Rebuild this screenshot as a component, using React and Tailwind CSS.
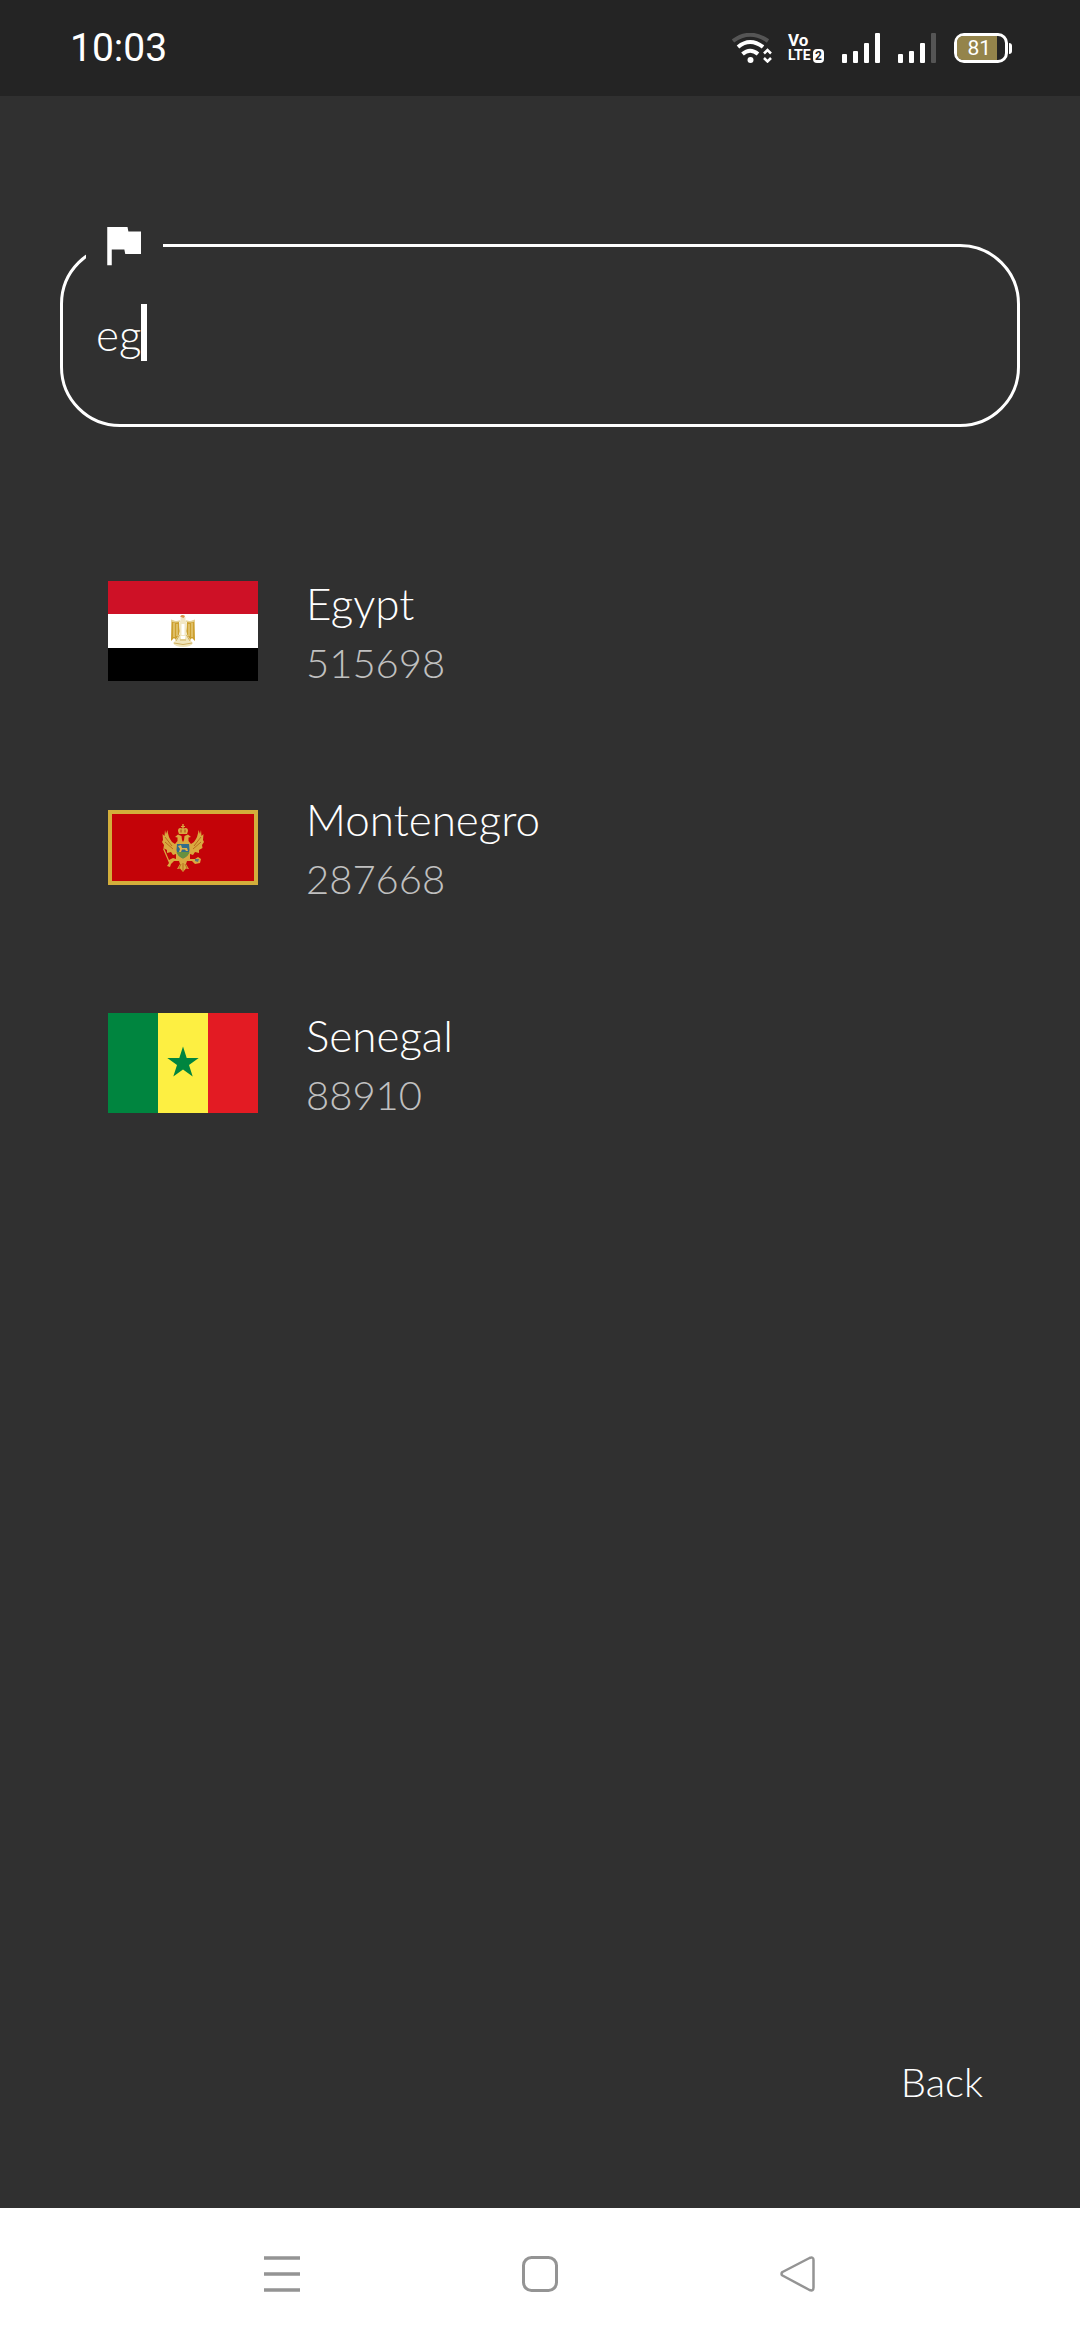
import { useState } from "react";

function EgyptFlag() {
  return (
    <svg viewBox="0 0 150 100" className="block w-full" role="img" aria-label="Flag of Egypt">
      <rect width="150" height="100" fill="#fff" />
      <rect width="150" height="33" fill="#ce1126" />
      <rect y="67" width="150" height="33" fill="#000" />
      <path d="M71 41Q66 41 63.500 38.500L63 60L66 57L68 59L70.500 55L72 50ZM79 41Q84 41 86.500 38.500L87 60L84 57L82 59L79.500 55L78 50Z" fill="#cc9f2e" />
      <path d="M66 42V56M69 43V55M84 42V56M81 43V55" stroke="#f0dc9b" strokeWidth="1" />
      <path d="M63.500 39.500Q67 41.500 72 40M86.500 39.500Q83 41.500 78 40" fill="none" stroke="#e6d397" strokeWidth="1.500" />
      <path d="M72.500 39Q72 34.500 75 34.500Q78 34.500 77.500 39L79 43L78 55H72L71 43Z" fill="#f2e7c4" />
      <path d="M75 43V54" stroke="#fff" strokeWidth="3" />
      <path d="M72 35.500Q74 33 77 35L75.500 37Z" fill="#d98f4a" />
      <path d="M72 52L67 60L65 62Q67 66 75 66Q83 66 85 62L83 60L78 52L77 58H73Z" fill="#efe4ba" />
      <path d="M71.500 54L68 60M78.500 54L82 60M66 62Q75 65 84 62M72 59H78" fill="none" stroke="#d0b05f" strokeWidth="1" />
    </svg>
  );
}

function MontenegroFlag() {
  return (
    <svg viewBox="0 0 150 75" className="block w-full" role="img" aria-label="Flag of Montenegro">
      <rect width="150" height="75" fill="#d3ae3b" />
      <rect x="4" y="4" width="142" height="67" fill="#c40308" />
      <g fill="#d9a940">
        <path d="M74.300 14H75.700V16H77V17H75.700V18.500Q80 17 80 21L79 24H71L70 21Q70 17 74.300 18.500V17H73V16H74.300Z" />
        <path d="M67 27L70 24.500L73.500 26L74 30L75 32L76 30L76.500 26L80 24.500L83 27L80.500 27.500L80.500 31L83 34L86 32Q90 27 90.500 20L92 24L93 20L93.500 26L95.500 24L95 30L96 32L94 35L94.500 38L91 40L91 43L87 42L85 45L82 44L82 49L87 49L90 47L93 49L92 53L87 54L84 51L79 51L78 54L81 59L78 58.500L75 62L72 58.500L69 59L72 54L71 51L66 51L63 54L62 57L59 56L61 53L55 39L56 38L61 50L65 48L68 49L68 44L65 45L63 42L59 43L59 40L55.500 38L56 35L54 32L55 30L54.500 24L56.500 26L57 20L58 24L59.500 20Q60 27 64 32L67 34L69.500 31V27.500Z" />
      </g>
      <path d="M57 27L64 36M57 32L65 39M93 27L86 36M93 32L85 39M73 54L71 58M77 54L79 58M75 53V61" fill="none" stroke="#b96b1d" strokeWidth="1" />
      <path d="M73 19.500V22.500M77 19.500V22.500" stroke="#a44a14" strokeWidth="1" />
      <path d="M69 34H81L81.500 40Q81 46 75 48.500Q69 46 68.500 40Z" fill="#316d8b" />
      <path d="M68.500 42H81.500Q80 46.500 75 48.500Q70 46.500 68.500 42Z" fill="#67913f" />
      <path d="M70 36L73 35L74 38H79L80 41H78L77 39.500H74L73 42H71L72 39Z" fill="#e2b64d" />
      <path d="M87 49H91L90 52L87 51Z" fill="#5b7281" />
    </svg>
  );
}

function SenegalFlag() {
  return (
    <svg viewBox="0 0 150 100" className="block w-full" role="img" aria-label="Flag of Senegal">
      <rect width="50" height="100" fill="#00853f" />
      <rect x="50" width="50" height="100" fill="#fdef42" />
      <rect x="100" width="50" height="100" fill="#e31b23" />
      <polygon points="75,33.500 78.700,45 90.700,45 81,52.100 84.700,63.500 75,56.500 65.300,63.500 69,52.100 59.300,45 71.300,45" fill="#00853f" />
    </svg>
  );
}

const countries = [
  { name: "Egypt", cases: "515698", Flag: EgyptFlag },
  { name: "Montenegro", cases: "287668", Flag: MontenegroFlag },
  { name: "Senegal", cases: "88910", Flag: SenegalFlag },
];

function Signal({ last }) {
  return (
    <svg viewBox="0 0 38 30" className="h-[30px] w-[38px]" fill="#fff" aria-hidden="true">
      <rect y="21" width="5" height="9" rx="1" />
      <rect x="11" y="18" width="5" height="12" rx="1" />
      <rect x="22" y="10" width="5" height="20" rx="1" />
      <rect x="33" width="5" height="30" rx="1" fill={last} />
    </svg>
  );
}

function StatusBar() {
  return (
    <header className="flex h-24 items-center justify-between bg-[#242424] pr-[68px] pl-[70px] font-normal text-white">
      <time className="font-[Roboto,sans-serif] text-[39px] leading-none">10:03</time>
      <div className="flex items-center">
        <svg viewBox="0 0 40 30" className="mr-4 h-[30px] w-10" fill="none" aria-hidden="true">
          <path d="M1 8Q18 -4.500 36 8" stroke="#555" strokeWidth="4" />
          <path d="M6 14Q18 4 31 14" stroke="#fff" strokeWidth="4" />
          <path d="M10.500 21Q18 14.500 26 21" stroke="#fff" strokeWidth="4" />
          <circle cx="18.500" cy="27" r="3" fill="#fff" />
          <path d="M32 20.500L35.500 17L39 20.500M32 25L35.500 28.500L39 25" stroke="#fff" strokeWidth="2.500" />
        </svg>
        <div className="mr-[18px] flex w-9 flex-col font-[Roboto,sans-serif] font-bold">
          <span className="text-[17px] leading-[15px]">Vo</span>
          <span className="flex items-center justify-between text-[14px] leading-[15px]">
            LTE
            <span className="flex h-[14px] w-[11px] items-center justify-center rounded-sm bg-white text-xs leading-none text-[#242424]">2</span>
          </span>
        </div>
        <div className="mr-[18px] flex"><Signal last="#fff" /></div>
        <div className="mr-[18px] flex"><Signal last="#555" /></div>
        <div className="flex h-[30px] w-[54px] rounded-[10px] border-[3px] border-white">
          <span className="flex w-10 items-center justify-end rounded-l-[6px] bg-[#94844b] pr-1.5 font-[Roboto,sans-serif] text-[21px] leading-none">81</span>
        </div>
        <span className="ml-px h-[11px] w-[3px] rounded-r-sm bg-white" />
      </div>
    </header>
  );
}

function NavBar() {
  return (
    <nav className="flex h-[132px] items-center justify-around bg-white px-[153px] text-[#949494]">
      <button aria-label="Recent apps">
        <svg viewBox="0 0 36 36" className="size-9" fill="none" stroke="currentColor" strokeWidth="3.500" strokeLinecap="square">
          <path d="M1.500 2H34.500M1.500 18H34.500M1.500 34H34.500" />
        </svg>
      </button>
      <button aria-label="Home">
        <svg viewBox="0 0 36 36" className="size-9" fill="none" stroke="currentColor" strokeWidth="3">
          <rect x="1.500" y="1.500" width="33" height="33" rx="8" />
        </svg>
      </button>
      <button aria-label="Previous screen">
        <svg viewBox="0 0 36 36" className="size-9" fill="none" stroke="currentColor" strokeWidth="2.500" strokeLinejoin="round">
          <path d="M2.500 16Q0.500 18 2.500 19.500L29.500 34Q33.500 35.500 33.500 31.500V4Q33.500 0.500 29.500 2Z" />
        </svg>
      </button>
    </nav>
  );
}

export default function App() {
  const [query, setQuery] = useState("eg");
  const shown = countries.filter((c) => c.name.toLowerCase().includes(query.toLowerCase()));

  return (
    <div className="flex min-h-screen flex-col bg-[#303030] font-[Lato,sans-serif] font-light text-white">
      <StatusBar />
      <main className="flex grow flex-col px-[60px] pt-[122px]">
        <fieldset className="rounded-[60px] border-[3px] border-white pr-8 pb-[63px] pl-[23px]">
          <legend className="pr-[13px] pl-2.5">
            <label htmlFor="country" aria-label="Country">
              <svg viewBox="0 0 24 24" className="block size-[54px]" fill="#fff" aria-hidden="true">
                <path d="M14.400 6L14 4H5v17h2v-7h5.600l.4 2h7V6z" />
              </svg>
            </label>
          </legend>
          <div className="mt-8 flex items-center pl-2.5">
            <input
              id="country"
              type="text"
              value={query}
              onChange={(e) => setQuery(e.target.value)}
              className="field-sizing-content h-[57px] bg-transparent pt-1 text-[44px] leading-[57px] caret-transparent outline-none"
            />
            <span className="h-[57px] w-1.5 bg-white" aria-hidden="true" />
          </div>
        </fieldset>
        <ul className="mt-24 flex flex-col">
          {shown.map(({ name, cases, Flag }) => (
            <li key={name} className="flex h-[216px] items-center gap-12 pl-12">
              <div className="w-[150px] shrink-0">
                <Flag />
              </div>
              <div className="pt-1">
                <h2 className="text-[44px] leading-[60px]">{name}</h2>
                <p className="text-[40px] leading-[60px] text-[#c0c0c0]">{cases}</p>
              </div>
            </li>
          ))}
        </ul>
        <button className="mt-auto mr-[37px] mb-[98px] self-end text-[40px] leading-[56px]">Back</button>
      </main>
      <NavBar />
    </div>
  );
}
